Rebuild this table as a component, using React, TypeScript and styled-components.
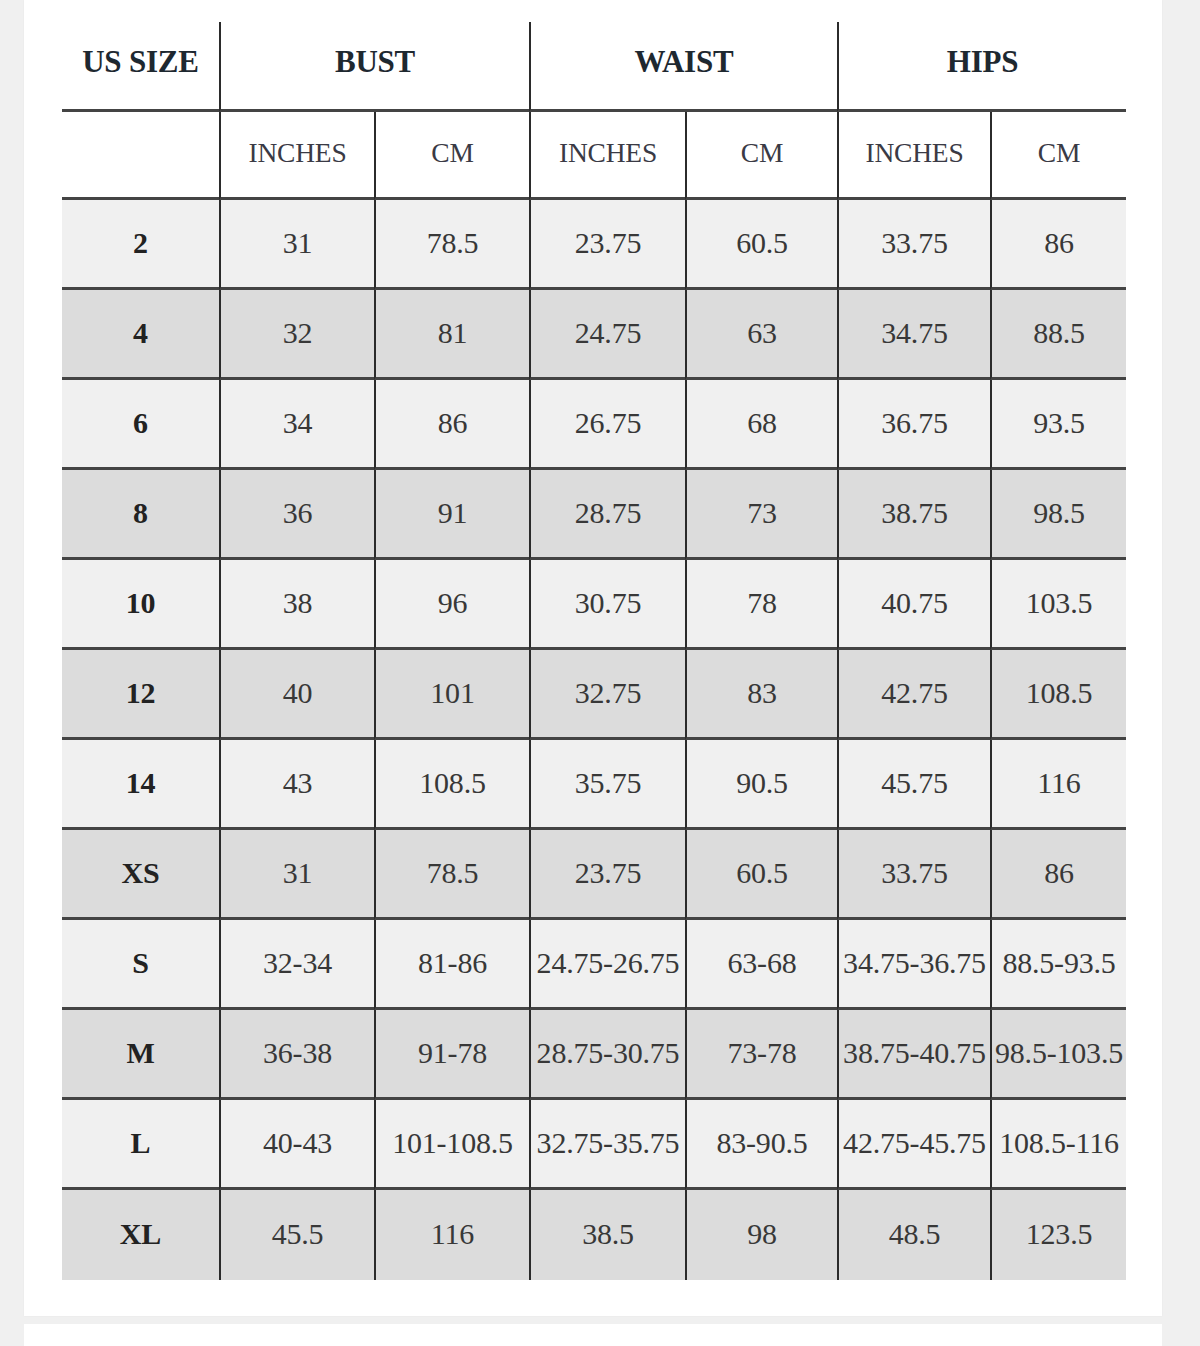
import React from "react";
import styled, { createGlobalStyle } from "styled-components";

const GlobalStyle = createGlobalStyle`
  html, body {
    margin: 0;
    padding: 0;
    background: #f0f0f0;
  }
  * {
    box-sizing: border-box;
  }
`;

const Page = styled.div`
  display: flex;
  flex-direction: column;
  gap: 8px;
  padding: 0 38px 0 24px;
  font-family: "Liberation Serif", "DejaVu Serif", serif;
`;

const Card = styled.div`
  background: #ffffff;
  padding: 22px 36px 36px 38px;
  box-shadow: 0 0 2px rgba(0, 0, 0, 0.04);
`;

const BottomCard = styled.div`
  background: #ffffff;
  height: 60px;
`;

const Chart = styled.div`
  display: grid;
  grid-template-columns: 157px 155px 155px 156px 152px 153px 136px;
  grid-template-rows: 90px 88px;
  grid-auto-rows: 90px;
  width: 1064px;
`;

const Cell = styled.div<{ $span?: number; $first?: boolean; $last?: boolean; $shade?: string }>`
  grid-column: span ${(p) => p.$span ?? 1};
  display: flex;
  align-items: center;
  justify-content: center;
  white-space: nowrap;
  background: ${(p) => p.$shade ?? "#ffffff"};
  border-left: ${(p) => (p.$first ? "none" : "2px solid #2b2b2b")};
  border-bottom: ${(p) => (p.$last ? "none" : "3px solid #444444")};
  font-variant-numeric: oldstyle-nums;
  letter-spacing: -0.2px;
`;

const GroupHead = styled(Cell)`
  font-size: 31px;
  font-weight: 700;
  color: #1e2830;
  padding-bottom: 8px;
`;

const UnitHead = styled(Cell)`
  font-size: 27.5px;
  font-weight: 400;
  color: #3a3a45;
  padding-bottom: 4px;
`;

const SizeCell = styled(Cell)`
  font-size: 30px;
  font-weight: 700;
  color: #222222;
  padding-bottom: 2px;
`;

const ValueCell = styled(Cell)`
  font-size: 30px;
  font-weight: 400;
  color: #383838;
  padding-bottom: 2px;
`;

const rows: string[][] = [
  ["2", "31", "78.5", "23.75", "60.5", "33.75", "86"],
  ["4", "32", "81", "24.75", "63", "34.75", "88.5"],
  ["6", "34", "86", "26.75", "68", "36.75", "93.5"],
  ["8", "36", "91", "28.75", "73", "38.75", "98.5"],
  ["10", "38", "96", "30.75", "78", "40.75", "103.5"],
  ["12", "40", "101", "32.75", "83", "42.75", "108.5"],
  ["14", "43", "108.5", "35.75", "90.5", "45.75", "116"],
  ["XS", "31", "78.5", "23.75", "60.5", "33.75", "86"],
  ["S", "32-34", "81-86", "24.75-26.75", "63-68", "34.75-36.75", "88.5-93.5"],
  ["M", "36-38", "91-78", "28.75-30.75", "73-78", "38.75-40.75", "98.5-103.5"],
  ["L", "40-43", "101-108.5", "32.75-35.75", "83-90.5", "42.75-45.75", "108.5-116"],
  ["XL", "45.5", "116", "38.5", "98", "48.5", "123.5"],
];

const App = () => (
  <>
    <GlobalStyle />
    <Page>
      <Card>
        <Chart>
          <GroupHead $first>US SIZE</GroupHead>
          <GroupHead $span={2}>BUST</GroupHead>
          <GroupHead $span={2}>WAIST</GroupHead>
          <GroupHead $span={2}>HIPS</GroupHead>

          <UnitHead $first />
          <UnitHead>INCHES</UnitHead>
          <UnitHead>CM</UnitHead>
          <UnitHead>INCHES</UnitHead>
          <UnitHead>CM</UnitHead>
          <UnitHead>INCHES</UnitHead>
          <UnitHead>CM</UnitHead>

          {rows.map((row, i) => {
            const shade = i % 2 === 0 ? "#f0f0f0" : "#dcdcdc";
            const last = i === rows.length - 1;
            return (
              <React.Fragment key={row[0]}>
                <SizeCell $first $shade={shade} $last={last}>
                  {row[0]}
                </SizeCell>
                {row.slice(1).map((v, j) => (
                  <ValueCell key={j} $shade={shade} $last={last}>
                    {v}
                  </ValueCell>
                ))}
              </React.Fragment>
            );
          })}
        </Chart>
      </Card>
      <BottomCard />
    </Page>
  </>
);

export default App;
